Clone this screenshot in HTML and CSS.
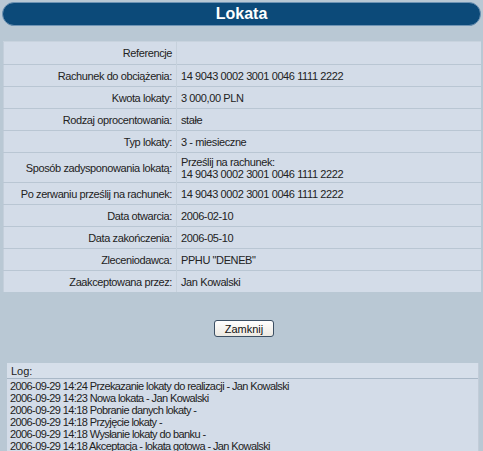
FILE: index.html
```html
<!DOCTYPE html>
<html lang="pl">
<head>
<meta charset="utf-8">
<title>Lokata</title>
<link rel="stylesheet" href="styles.css">
</head>
<body>
<div class="page">
  <div class="titlebar">Lokata</div>
  <div class="spacer"></div>
  <table class="details">
    <tr><td class="lbl">Referencje</td><td class="val"></td></tr>
    <tr><td class="lbl">Rachunek do obciążenia:</td><td class="val">14 9043 0002 3001 0046 1111 2222</td></tr>
    <tr><td class="lbl">Kwota lokaty:</td><td class="val">3 000,00 PLN</td></tr>
    <tr><td class="lbl">Rodzaj oprocentowania:</td><td class="val">stałe</td></tr>
    <tr><td class="lbl">Typ lokaty:</td><td class="val">3 - miesieczne</td></tr>
    <tr class="tall"><td class="lbl">Sposób zadysponowania lokatą:</td><td class="val">Prześlij na rachunek:<br>14 9043 0002 3001 0046 1111 2222</td></tr>
    <tr><td class="lbl">Po zerwaniu prześlij na rachunek:</td><td class="val">14 9043 0002 3001 0046 1111 2222</td></tr>
    <tr><td class="lbl">Data otwarcia:</td><td class="val">2006-02-10</td></tr>
    <tr><td class="lbl">Data zakończenia:</td><td class="val">2006-05-10</td></tr>
    <tr><td class="lbl">Zleceniodawca:</td><td class="val">PPHU "DENEB"</td></tr>
    <tr><td class="lbl">Zaakceptowana przez:</td><td class="val">Jan Kowalski</td></tr>
  </table>
  <div class="actions"><button class="btn">Zamknij</button></div>
  <div class="log">
    <div class="log-head">Log:</div>
    <div class="log-body">
      <div>2006-09-29 14:24 Przekazanie lokaty do realizacji - Jan Kowalski</div>
      <div>2006-09-29 14:23 Nowa lokata - Jan Kowalski</div>
      <div>2006-09-29 14:18 Pobranie danych lokaty -</div>
      <div>2006-09-29 14:18 Przyjęcie lokaty -</div>
      <div>2006-09-29 14:18 Wysłanie lokaty do banku -</div>
      <div>2006-09-29 14:18 Akceptacja - lokata gotowa - Jan Kowalski</div>
    </div>
  </div>
</div>
</body>
</html>
```
FILE: styles.css
```css
html, body {
  margin: 0;
  padding: 0;
  background: #b9c8d4;
  height: 451px;
  overflow: hidden;
}
body {
  font-family: "Liberation Sans", Arial, sans-serif;
  font-size: 11px;
  color: #222;
}
.page {
  padding: 2px 2px 0 2px;
}
.titlebar {
  height: 22px;
  line-height: 22px;
  background: #0c4a79;
  border: 1px solid #6f94b4;
  border-radius: 12px;
  color: #fff;
  font-weight: bold;
  font-size: 16px;
  text-align: center;
}
.spacer {
  height: 15px;
}
.details {
  width: 478px;
  margin-left: 1px;
  border-collapse: collapse;
  background: #d3dce8;
  border-left: 1px solid #c4cfdb;
}
.details td {
  height: 21px;
  padding: 0;
  border-top: 1px solid #b9c6d3;
  vertical-align: middle;
  line-height: 12px;
  letter-spacing: -0.4px;
}
.details tr:first-child td {
  border-top: 1px solid #c8d3de;
  height: 22px;
}
.details tr.tall td {
  height: 29px;
}
.details .lbl {
  width: 168px;
  text-align: right;
  padding-right: 4px;
  border-right: 1px solid #c6d1dc;
}
.details .val {
  padding-left: 4px;
}
.actions {
  display: flex;
  justify-content: center;
  padding-top: 28px;
  height: 43px;
}
.btn {
  font-family: "Liberation Sans", Arial, sans-serif;
  font-size: 11px;
  color: #111;
  width: 60px;
  height: 17px;
  padding: 0;
  margin-left: 5px;
  background: linear-gradient(#ffffff, #ece9e2);
  border: 1px solid #3c4f63;
  border-radius: 3px;
}
.log {
  margin-left: 5px;
  width: 471px;
  background: #d3dce8;
  border-right: 1px solid #c2ccd8;
}
.log-head {
  height: 14px;
  line-height: 14px;
  padding-left: 4px;
  padding-top: 1px;
  border-bottom: 1px solid #a9b8c7;
  background: #d6dfea;
}
.log-body {
  padding-left: 3px;
  padding-top: 1px;
  line-height: 12px;
  letter-spacing: -0.6px;
}
```
